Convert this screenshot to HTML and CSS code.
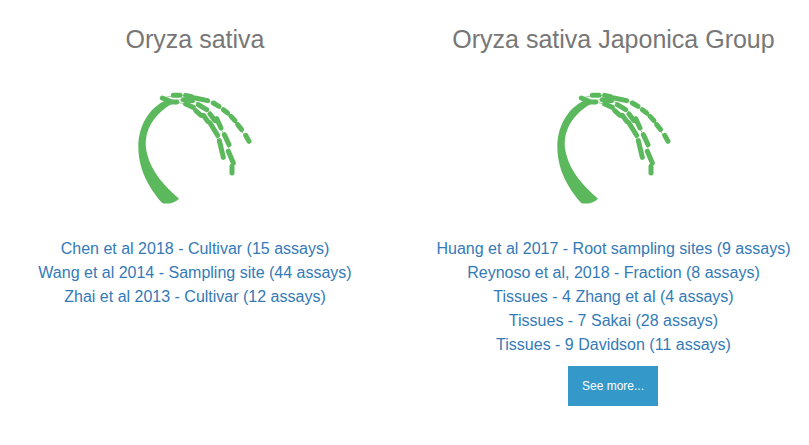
FILE: index.html
```html
<!DOCTYPE html>
<html>
<head>
    <meta charset="utf-8">
    <link rel="stylesheet" href="styles.css">
</head>
<body>
    <svg class="defs" width="0" height="0">
        <symbol id="rice" viewBox="0 0 450 390">
            <path class="stem" d="M135 62C85 85 55 140 55 200C55 280 100 340 128 370C145 373 165 368 177 356C130 315 88 270 78 205C73 150 100 105 155 72Z"/>
            <path class="thread" d="M125 55C170 42 210 45 255 58C300 75 350 125 382 180"/>
            <path class="thread" d="M150 66C200 50 240 65 270 95C300 125 325 190 340 250L336 280"/>
            <path class="thread" d="M130 55C160 65 205 68 235 97C265 122 300 175 310 232"/>
            <path class="grain" d="M127 54L150 64M160 46L180 46M197 46L215 50M225 54L263 62M280 69L297 79M310 89L323 99M333 109L345 122M353 134L365 149M377 166L387 184"/>
            <path class="grain" d="M150 66L170 66M190 59L217 62M235 74L260 89M270 102L285 122M290 116L303 144M313 164L327 194M325 214L340 249M336 259L336 279"/>
            <path class="grain" d="M197 72L220 82M227 92L243 106M250 106L263 124M270 129L293 166M298 182L310 232"/>
        </symbol>
    </svg>
    <div class="species-grid">
        <div class="species">
            <h2>Oryza sativa</h2>
            <svg class="species-icon"><use href="#rice"/></svg>
            <ul class="study-list">
                <li><a href="#">Chen et al 2018 - Cultivar (15 assays)</a></li>
                <li><a href="#">Wang et al 2014 - Sampling site (44 assays)</a></li>
                <li><a href="#">Zhai et al 2013 - Cultivar (12 assays)</a></li>
            </ul>
        </div>
        <div class="species">
            <h2>Oryza sativa Japonica Group</h2>
            <svg class="species-icon"><use href="#rice"/></svg>
            <ul class="study-list">
                <li><a href="#">Huang et al 2017 - Root sampling sites (9 assays)</a></li>
                <li><a href="#">Reynoso et al, 2018 - Fraction (8 assays)</a></li>
                <li><a href="#">Tissues - 4 Zhang et al (4 assays)</a></li>
                <li><a href="#">Tissues - 7 Sakai (28 assays)</a></li>
                <li><a href="#">Tissues - 9 Davidson (11 assays)</a></li>
            </ul>
            <button class="see-more">See more...</button>
        </div>
    </div>
</body>
</html>
```

FILE: styles.css
```css
body {
    margin: 0;
    background: #fff;
    font-family: "Liberation Sans", Arial, sans-serif;
    overflow: hidden;
}
.defs {
    display: block;
}
.species-grid {
    display: grid;
    grid-template-columns: 390px 391px;
    column-gap: 28px;
}
.species {
    display: flex;
    flex-direction: column;
    align-items: center;
    text-align: center;
}
h2 {
    margin: 25px 0 0 0;
    font-size: 25px;
    line-height: 29px;
    font-weight: normal;
    color: #777;
}
.species-icon {
    display: block;
    width: 150px;
    height: 130px;
    margin-top: 26px;
}
.stem {
    fill: #5cb85c;
}
.thread {
    fill: none;
    stroke: #5cb85c;
    stroke-width: 2;
}
.grain {
    fill: none;
    stroke: #5cb85c;
    stroke-width: 15;
    stroke-linecap: round;
}
.study-list {
    list-style: none;
    margin: 27px 0 0 0;
    padding: 0;
    font-size: 16px;
    line-height: 24px;
    white-space: nowrap;
}
.study-list a {
    color: #337ab7;
    text-decoration: none;
}
.see-more {
    width: 90px;
    height: 40px;
    margin: 9px 1px 0 0;
    padding: 0;
    border: none;
    background: #3498c8;
    color: #fff;
    font-family: inherit;
    font-size: 12px;
}
```
